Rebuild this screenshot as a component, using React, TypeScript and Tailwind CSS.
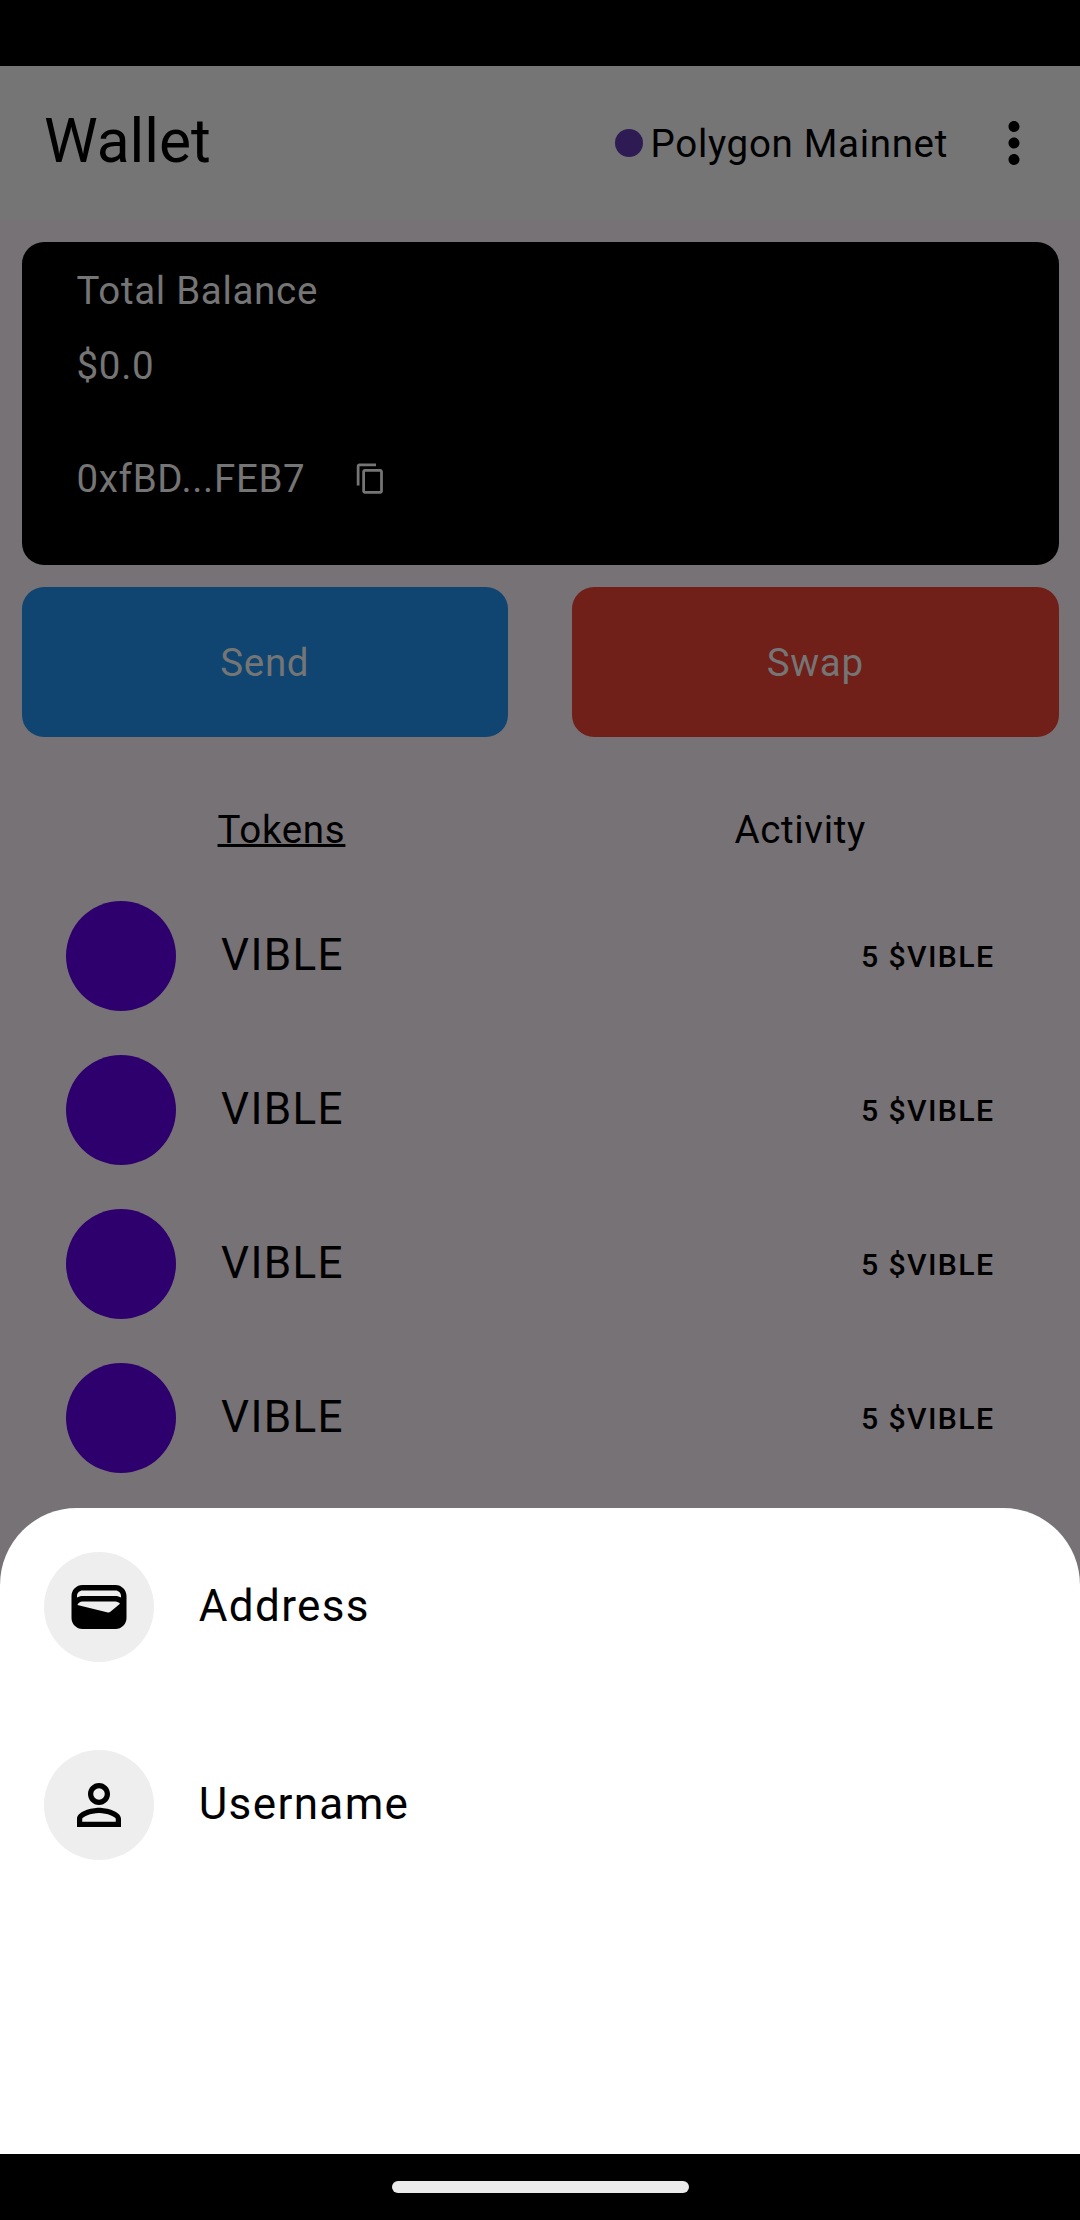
import { MdContentCopy, MdMoreVert, MdPersonOutline, MdWallet } from "react-icons/md";
import type { ReactNode } from "react";

const tokens = ["VIBLE", "VIBLE", "VIBLE", "VIBLE"];

function TokenRow({ name }: { name: string }) {
  return (
    <li className="flex h-[154px] items-center pr-[85.5px] pl-[66px]">
      <span className="size-[110px] rounded-full bg-[#2d006d]" />
      <span className="-mt-0.5 ml-[45px] text-[44px] leading-[66px] tracking-[1.375px]">{name}</span>
      <span className="mt-0.5 ml-auto text-[30.25px] font-medium leading-[44px] tracking-[1.375px]">5 $VIBLE</span>
    </li>
  );
}

function SheetItem({ icon, label }: { icon: ReactNode; label: string }) {
  return (
    <li className="flex h-[110px] items-center gap-[44.7px]">
      <span className="flex size-[110px] items-center justify-center rounded-full bg-[#eeeeee] text-[66px]">{icon}</span>
      <span className="-mt-[3px] text-[44px] leading-[66px] tracking-[1.375px]">{label}</span>
    </li>
  );
}

export default function App() {
  return (
    <div className="relative flex h-[2220px] w-[1080px] flex-col overflow-hidden bg-[#777276] font-['Roboto',sans-serif] text-[38.5px] leading-[55px] tracking-[0.6875px] text-black">
      <div className="h-[66px] shrink-0 bg-black" />
      <header className="flex h-[154px] shrink-0 items-center bg-[#757575] pr-[33px] pl-11">
        <h1 className="-mt-1 text-[60.5px] leading-[77px] tracking-normal">Wallet</h1>
        <div className="ml-auto flex items-center">
          <span className="size-[27.5px] rounded-full bg-[#2f1b54]" />
          <span className="ml-2">Polygon Mainnet</span>
        </div>
        <MdMoreVert className="ml-[33px] size-[66px]" />
      </header>

      <main className="px-[21.5px] pt-[22px]">
        <section className="h-[323px] rounded-[22px] bg-black px-[55px] pt-[21px] text-[#757575]">
          <p>Total Balance</p>
          <p className="mt-5">$0.0</p>
          <div className="mt-[58px] flex items-center">
            <span>0xfBD...FEB7</span>
            <MdContentCopy className="ml-[48.5px] size-[33px]" />
          </div>
        </section>

        <div className="mt-[22px] grid grid-cols-2 gap-[64px] text-[#757575]">
          <button className="h-[150px] rounded-[22px] bg-[#0f4570] pt-px">Send</button>
          <button className="h-[150px] rounded-[22px] bg-[#701f19] pt-px">Swap</button>
        </div>
      </main>

      <nav className="mt-[65px] flex h-[55px]">
        <span className="ml-[217.5px] underline decoration-[2.5px] underline-offset-[1px]">Tokens</span>
        <span className="ml-[389px]">Activity</span>
      </nav>

      <ul className="mt-[22px]">
        {tokens.map((name, i) => (
          <TokenRow key={i} name={name} />
        ))}
      </ul>

      <section className="absolute inset-x-0 top-[1507.5px] h-[646.5px] rounded-t-[77px] bg-white px-11 pt-[44.5px]">
        <ul className="flex flex-col gap-[88px]">
          <SheetItem icon={<MdWallet />} label="Address" />
          <SheetItem icon={<MdPersonOutline />} label="Username" />
        </ul>
      </section>

      <footer className="absolute inset-x-0 bottom-0 flex h-[66px] justify-center bg-black pt-[27px]">
        <span className="h-[11.5px] w-[297px] rounded-full bg-[#ebebeb]" />
      </footer>
    </div>
  );
}
